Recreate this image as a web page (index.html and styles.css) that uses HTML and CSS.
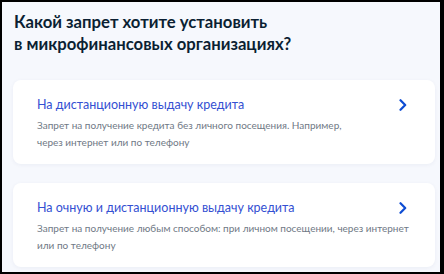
FILE: index.html
```html
<!DOCTYPE html>
<html>
<head>
    <meta charset="utf-8">
    <title>Запрет на кредиты</title>
    <link rel="stylesheet" href="styles.css">
</head>
<body>
    <div class="frame">
        <h1 class="question">Какой запрет хотите установить<br>в микрофинансовых организациях?</h1>

        <div class="options">
            <div class="option">
                <div class="option-head">
                    <p class="option-title">На дистанционную выдачу кредита</p>
                    <svg class="chevron" width="8" height="12" viewBox="0 0 8 12">
                        <path d="M1.5 1.2 L6.2 6 L1.5 10.8" fill="none" stroke="#0d4cd3" stroke-width="2.2" stroke-linecap="round" stroke-linejoin="round"/>
                    </svg>
                </div>
                <p class="option-desc">Запрет на получение кредита без личного посещения. Например,<br>через интернет или по телефону</p>
            </div>

            <div class="option">
                <div class="option-head">
                    <p class="option-title">На очную и дистанционную выдачу кредита</p>
                    <svg class="chevron" width="8" height="12" viewBox="0 0 8 12">
                        <path d="M1.5 1.2 L6.2 6 L1.5 10.8" fill="none" stroke="#0d4cd3" stroke-width="2.2" stroke-linecap="round" stroke-linejoin="round"/>
                    </svg>
                </div>
                <p class="option-desc">Запрет на получение любым способом: при личном посещении, через интернет<br>или по телефону</p>
            </div>
        </div>
    </div>
</body>
</html>
```

FILE: styles.css
```css
body {
    margin: 0;
    padding: 0;
    font-family: 'Lato', 'Noto Sans', sans-serif;
    overflow: hidden;
}

.frame {
    box-sizing: border-box;
    width: 444px;
    height: 274px;
    border-style: solid;
    border-color: #000;
    border-width: 2px 4px 2px 2px;
    background: #f6f8fd;
    padding: 0 5px 0 11px;
    overflow: hidden;
}

.question {
    margin: 9px 0 0 1px;
    font-size: 16.7px;
    line-height: 22px;
    font-weight: 700;
    color: #0b1f33;
}

.options {
    display: flex;
    flex-direction: column;
    gap: 19px;
    margin-top: 25px;
}

.option {
    background: #fff;
    border-radius: 8px;
    padding: 16px 28px 13px 24px;
    box-shadow: 0 1px 4px rgba(20, 40, 100, 0.05);
}

.option-head {
    display: flex;
    align-items: center;
    justify-content: space-between;
}

.option-title {
    margin: 0;
    font-size: 12.5px;
    line-height: 18px;
    color: #3450d2;
}

.chevron {
    flex-shrink: 0;
}

.option-desc {
    margin: 3px 0 0;
    font-size: 10px;
    line-height: 17px;
    color: #6f7985;
    white-space: nowrap;
}
```
